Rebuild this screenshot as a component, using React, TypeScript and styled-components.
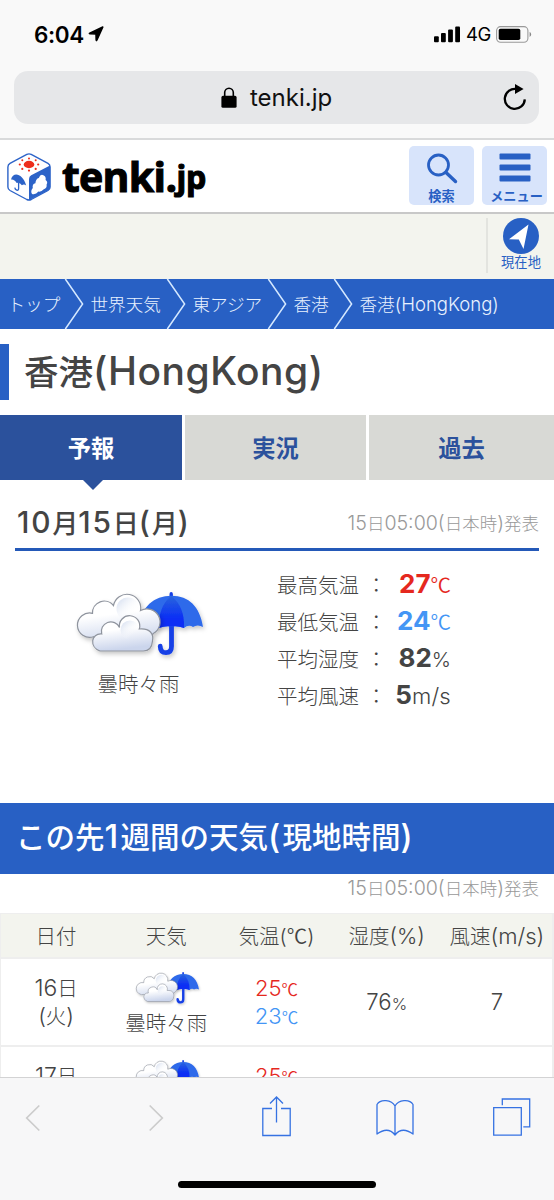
import React from "react";
import styled, { createGlobalStyle } from "styled-components";

const BLUE = "#2860c4";
const INK = "#444";
const RED = "#e5281e";
const SKY = "#4395f5";

const GlobalStyle = createGlobalStyle`
  * { box-sizing: border-box; }
  body {
    margin: 0;
    background: #fff;
    color: ${INK};
    font-family: Inter, "Noto Sans CJK JP", sans-serif;
  }
`;

const Screen = styled.div`
  display: flex;
  flex-direction: column;
  width: 554px;
  height: 1200px;
  overflow: hidden;
  background: #fff;
`;

const Label = styled.span`
  white-space: nowrap;
`;

const Latin = styled.span<{ $scale: number; $track: number }>`
  font-size: ${(p) => p.$scale}em;
  letter-spacing: ${(p) => p.$track}em;
  line-height: 0;
`;

const FullWidth = styled.span`
  font-family: "Noto Sans CJK JP", sans-serif;
  font-weight: 350;
  line-height: 0;
`;

/* Japanese text whose Latin letters and digits are set a little larger. */
const Mixed = ({ text, scale = 1.08, track = 0 }: { text: string; scale?: number; track?: number }) => (
  <Label>
    {text.split(/([!-~]+|℃)/).map((part, i) => {
      if (part === "℃") return <FullWidth key={i}>{part}</FullWidth>;
      if (/^[!-~]/.test(part)) return <Latin key={i} $scale={scale} $track={track}>{part}</Latin>;
      return part;
    })}
  </Label>
);

/* Browser chrome */
const BrowserTop = styled.div`
  flex: none;
  height: 140px;
  padding: 0 15px 0 14px;
  background: #f9f9f9;
  border-bottom: 2px solid #d9dadb;
`;

const StatusBar = styled.div`
  display: flex;
  align-items: center;
  height: 71px;
  padding: 0 7px 3px 20px;
  color: #000;
`;

const Clock = styled.span`
  width: 54px;
  font-size: 22.5px;
  font-weight: 600;
  letter-spacing: -0.4px;
`;

const StatusRight = styled.div`
  display: flex;
  align-items: center;
  margin-left: auto;
`;

const Network = styled.span`
  width: 35px;
  padding-left: 5px;
  font-size: 18.5px;
  letter-spacing: -0.5px;
`;

const AddressBar = styled.div`
  display: grid;
  grid-template-columns: 207px 1fr 36px;
  align-items: center;
  height: 53px;
  border-radius: 14px;
  background: #e6e7e9;
  color: #111;
`;

const Address = styled.div`
  display: flex;
  align-items: center;
  grid-column: 2;
  gap: 13px;
  font-size: 24px;
`;

/* Site header */
const SiteHeader = styled.header`
  flex: none;
  display: flex;
  height: 74px;
  padding: 6px 7px 0 7px;
  border-bottom: 2px solid #c8c8c8;
  background: #fff;
`;

const Brand = styled.div`
  display: flex;
  align-items: flex-start;
  gap: 11px;
  padding-top: 7px;
  flex: 1;
`;

const Wordmark = styled.div`
  display: flex;
  align-items: baseline;
  height: 48px;
  font-family: "Open Sans", sans-serif;
  font-weight: 700;
  font-size: 41px;
  line-height: 47px;
  letter-spacing: -0.7px;
  color: #000;
  -webkit-text-stroke: 1.1px #000;
`;

const WordmarkSuffix = styled.span`
  position: relative;
  top: -3px;
  font-size: 32px;
  letter-spacing: -0.2px;
`;

const HeaderButton = styled.button`
  display: flex;
  flex-direction: column;
  align-items: center;
  justify-content: flex-end;
  gap: 3px;
  width: 65px;
  height: 59px;
  margin-left: 8px;
  padding: 0 0 1px;
  border: 0;
  border-radius: 5px;
  background: #d8e4fb;
  color: ${BLUE};
  font: 700 13.2px/16px "Noto Sans CJK JP", sans-serif;
`;

const MenuLabel = styled(Label)`
  margin-left: 4px;
`;

const LocationBar = styled.div`
  flex: none;
  display: flex;
  justify-content: flex-end;
  height: 65px;
  padding: 4px 0 6px;
  background: #f3f4ee;
`;

const LocationButton = styled.div`
  display: flex;
  flex-direction: column;
  align-items: center;
  width: 68px;
  border-left: 2px solid #e3e4df;
  color: ${BLUE};
  font-size: 13.3px;
  line-height: 17px;
`;

const Breadcrumb = styled.nav`
  flex: none;
  display: flex;
  align-items: center;
  height: 50px;
  background: ${BLUE};
  color: #e8f2ff;
  font-size: 17.6px;
  font-weight: 300;
`;

const Crumb = styled.span<{ $width: number }>`
  width: ${(p) => p.$width}px;
  padding: 0 0 2px 7.5px;
  white-space: nowrap;
`;

const PageTitle = styled.h1`
  flex: none;
  display: flex;
  align-items: center;
  height: 56px;
  margin: 15px 0;
  padding: 2px 0 0 15px;
  border-left: 9px solid ${BLUE};
  font-size: 34.5px;
  line-height: 54px;
  font-weight: 500;
`;

const Tabs = styled.div`
  flex: none;
  display: grid;
  grid-template-columns: 182px 181px 185px;
  gap: 3px;
  height: 65px;
`;

const Tab = styled.div<{ $active?: boolean }>`
  position: relative;
  display: flex;
  align-items: center;
  justify-content: center;
  padding-bottom: 1px;
  background: ${(p) => (p.$active ? "#2b519c" : "#d8d9d5")};
  color: ${(p) => (p.$active ? "#fff" : "#2b519c")};
  font-size: 23.3px;
  font-weight: 700;
`;

const TabArrow = styled.i`
  position: absolute;
  top: 100%;
  left: 83px;
  border: solid transparent;
  border-width: 10px 10px 0;
  border-top-color: #2b519c;
`;

/* Today's forecast */
const DayHeading = styled.div`
  flex: none;
  display: flex;
  align-items: center;
  justify-content: space-between;
  height: 71px;
  margin: 0 15px;
  padding: 20px 0 0 2px;
  border-bottom: 3px solid #2459b8;
`;

const DayName = styled.h2`
  margin: 0;
  font-size: 26px;
  line-height: 30px;
  font-weight: 550;
`;

const Issued = styled.span`
  color: #999;
  font-size: 17.5px;
  line-height: 22px;
  font-weight: 300;
  white-space: nowrap;
`;

const Today = styled.section`
  flex: none;
  display: grid;
  grid-template-columns: 277px 1fr;
  height: 252px;
  padding-top: 14px;
  font-size: 20.5px;
  font-weight: 300;
`;

const TodayWeather = styled.div`
  display: flex;
  flex-direction: column;
  align-items: center;
  gap: 10px;
  padding-top: 25px;
  line-height: 30px;
  & > svg {
    margin-left: 7px;
  }
`;

const Measures = styled.div`
  display: flex;
  flex-direction: column;
`;

const Measure = styled.div<{ $color?: string }>`
  display: grid;
  grid-template-columns: 89px 20px 65px;
  align-items: baseline;
  height: 37px;
  line-height: 37px;
  white-space: nowrap;
  & > :last-child {
    text-align: right;
    justify-self: end;
    color: ${(p) => p.$color ?? INK};
  }
  b {
    font-size: 26px;
    font-weight: 700;
  }
`;

/* Weekly table */
const WeekHeading = styled.h2`
  flex: none;
  display: flex;
  align-items: center;
  height: 71px;
  margin: 0;
  padding: 0 0 4px 16px;
  background: ${BLUE};
  color: #fff;
  font-size: 29.5px;
  line-height: 40px;
  font-weight: 500;
`;

const WeekIssued = styled.div`
  flex: none;
  display: flex;
  justify-content: flex-end;
  height: 39px;
  padding: 4px 15px 0;
`;

const WeekTable = styled.div`
  flex: 1;
  min-height: 0;
  overflow: hidden;
  border: solid #eee;
  border-width: 1px 2px 0 1px;
  font-size: 20.5px;
  font-weight: 300;
`;

const WeekRow = styled.div<{ $head?: boolean }>`
  display: grid;
  grid-template-columns: repeat(5, 1fr);
  align-items: center;
  justify-items: center;
  height: ${(p) => (p.$head ? 45 : 88)}px;
  padding-bottom: ${(p) => (p.$head ? 2 : 0)}px;
  border-bottom: 2px solid #eee;
  background: ${(p) => (p.$head ? "#f3f4ee" : "#fff")};
  white-space: nowrap;
`;

const Stack = styled.div`
  display: flex;
  flex-direction: column;
  align-items: center;
  line-height: 28px;
`;

const DateCell = styled(Stack)`
  padding-top: 2px;
`;

const WeatherCell = styled(Stack)`
  gap: 4px;
  padding-top: 4px;
  & > svg {
    margin-left: 5px;
  }
`;

const Degree = styled.span<{ $color: string }>`
  height: 28px;
  color: ${(p) => p.$color};
  font-size: 22px;
`;

const Unit = styled.small`
  font-size: 16.5px;
  line-height: 0;
`;

/* Bottom toolbar */
const Toolbar = styled.footer`
  flex: none;
  display: flex;
  flex-direction: column;
  align-items: center;
  height: 123px;
  border-top: 1px solid #d3d3d4;
  background: #f7f7f8;
`;

const ToolbarIcons = styled.div`
  display: grid;
  grid-template-columns: 65px 182px 59px 177px 58px;
  align-items: center;
  justify-items: center;
  align-self: flex-start;
  height: 80px;
`;

const HomeIndicator = styled.div`
  width: 198px;
  height: 7px;
  margin-top: 23px;
  border-radius: 4px;
  background: #000;
`;

const Block = styled.svg`
  display: block;
  flex: none;
  overflow: visible;
`;

const LocationArrow = () => (
  <Block width="16" height="16" viewBox="0 0 16 16">
    <path d="M14.800 1 8.800 14.200q-.5.900-.6-.2L8 8 2 7.800q-1.100-.1-.2-.6Z" fill="#000" stroke="#000" strokeWidth="1.600" strokeLinejoin="round" />
  </Block>
);

const StatusIcons = () => (
  <>
    <Block width="27" height="17" viewBox="0 0 27 17">
      <rect x="0" y="10.200" width="4.800" height="6" rx="1" />
      <rect x="7" y="7" width="4.800" height="9.200" rx="1" />
      <rect x="14.100" y="3.600" width="4.800" height="12.600" rx="1" />
      <rect x="21.200" y=".4" width="4.800" height="15.800" rx="1" />
    </Block>
    <Network>4G</Network>
    <Block width="36" height="17" viewBox="0 0 36 17">
      <rect x=".6" y=".6" width="31.300" height="15.600" rx="4" fill="none" stroke="#999" strokeWidth="1.100" />
      <rect x="2.700" y="2.700" width="21.600" height="11.400" rx="1.800" />
      <path d="M33.600 5.700q3.200 2.700 0 5.400Z" fill="#888" />
    </Block>
  </>
);

const Lock = () => (
  <Block width="16" height="21" viewBox="0 0 16 21">
    <path d="M3.700 10V5.600a4.300 4.400 0 0 1 8.600 0V10" fill="none" stroke="#000" strokeWidth="1.600" />
    <rect x=".4" y="8.800" width="15.200" height="12" rx="1.600" />
  </Block>
);

const Reload = () => (
  <Block width="24" height="27" viewBox="0 0 24 27">
    <path d="M13.500 5A10 10 0 1 0 21.800 15.400" fill="none" stroke="#000" strokeWidth="2.300" />
    <path d="M12 0 20.600 5.100 12 10Z" />
  </Block>
);

const CubeLogo = () => (
  <Block width="44" height="48" viewBox="0 0 44 48">
    <path
      d="M19.800 1.400q2.200-1.100 4.400 0l16.800 9q2.100 1.200 2.100 3.600v20q0 2.300-2.100 3.500l-16.800 9q-2.200 1.100-4.400 0L3 37.500Q.9 36.300.9 34V14q0-2.400 2.100-3.600Z"
      fill="#fff"
      stroke="#2c63c8"
      strokeWidth="1.400"
    />
    <path d="M43 12.500V34.500q0 2-2 3L22 47.200V26q0-2.500 2.200-3.700Z" fill="#2c63c8" />
    <path d="M25 41q-1.800-3 .8-6-.8-4 2.600-4.700.4-4.800 3.400-5.400 1.700-4.300 4.600-2.700 2.900 1.400 2.200 4.700 2.600 1.600 1 4.600.6 3.600-2.800 4.800-2.400 2.800-5.400 2.300-2.600 3.300-6.400 2.400Z" fill="#fff" />
    <ellipse cx="22" cy="11.500" rx="5.300" ry="3.700" fill="#ee2d1b" />
    <g fill="#ee2d1b">
      <circle cx="22" cy="5.400" r="1" /><circle cx="22" cy="17.600" r="1.100" />
      <circle cx="12.800" cy="11.500" r="1.100" /><circle cx="31.200" cy="11.500" r="1.100" />
      <circle cx="15.300" cy="7.200" r="1" /><circle cx="28.700" cy="7.200" r="1" />
      <circle cx="15.300" cy="15.900" r="1.100" /><circle cx="28.700" cy="15.900" r="1.100" />
    </g>
    <path d="M4 26.500C6 18.500 15.500 20 19.200 32.500q-2.200-1.700-4.300-.2-2.200-3.300-5.200-2.300-2.300-4-5.700-3.500Z" fill="#2c63c8" />
    <path d="M11.600 29.500v6q0 2.200-1.900 1.600-1.600-.6-1.900-2.500" fill="none" stroke="#2c63c8" strokeWidth="1.300" />
  </Block>
);

const SearchIcon = () => (
  <Block width="32" height="32" viewBox="0 0 32 32">
    <circle cx="12.500" cy="12" r="10" fill="none" stroke={BLUE} strokeWidth="2.800" />
    <path d="M20 19.500 29.500 28.500" stroke={BLUE} strokeWidth="3.400" strokeLinecap="round" />
  </Block>
);

const MenuIcon = () => (
  <Block width="32" height="32" viewBox="0 0 32 32">
    <g fill={BLUE}>
      <rect x=".5" y=".5" width="31" height="6" rx="1" />
      <rect x=".5" y="11.500" width="31" height="6" rx="1" />
      <rect x=".5" y="22.500" width="31" height="6" rx="1" />
    </g>
  </Block>
);

const CompassIcon = () => (
  <Block width="36" height="36" viewBox="0 0 36 36">
    <circle cx="18" cy="18" r="18" fill={BLUE} />
    <path d="M25.500 6.500 20.500 31 15.800 21.600 6 21.200Z" fill="#fff" />
  </Block>
);

const CrumbChevron = () => (
  <Block width="18" height="50" viewBox="0 0 18 50">
    <path d="M.3 0 17.600 25 .3 50" fill="none" stroke="#d4e8ff" strokeWidth="1.500" />
  </Block>
);

const CloudUmbrella = ({ id, width }: { id: string; width: number }) => (
  <Block width={width} height={(width * 70) / 130} viewBox="0 0 130 70">
    <defs>
      <linearGradient id={`${id}-cloud`} x1="0" y1="0" x2=".2" y2="1">
        <stop offset=".45" stopColor="#fff" />
        <stop offset="1" stopColor="#cbd5ec" />
      </linearGradient>
      <linearGradient id={`${id}-puff`} x1="0" y1="0" x2="1" y2="1">
        <stop offset="0" stopColor="#ccd7ec" />
        <stop offset=".7" stopColor="#fff" stopOpacity="0" />
      </linearGradient>
      <linearGradient id={`${id}-canopy`} x1="0" y1="0" x2="0" y2="1">
        <stop offset="0" stopColor="#2a66dd" />
        <stop offset=".7" stopColor="#0b2ef5" />
      </linearGradient>
      <filter id={`${id}-shadow`} x="-10%" y="-10%" width="130%" height="135%">
        <feDropShadow dx="1.500" dy="2.500" stdDeviation="2" floodOpacity=".22" />
      </filter>
    </defs>
    <g filter={`url(#${id}-shadow)`}>
      <path d="M94.500 34V56.500q0 6.200-5.500 6.200-5.600 0-5.800-6.500" fill="none" stroke="#1740e6" strokeWidth="4.800" strokeLinecap="round" />
      <path d="M92.500 4q0-2 1.700-2t1.700 2v3h-3.400Z" fill="#1740e6" />
      <path d="M62 37C64 17 77 5.800 94.500 5.800S123 17 126 37q-5.500-3-10 0-4.500-3-9 1-6-2.500-12.500-1.500-6.500-1-12.500 1.500-5-4-20-1Z" fill="#2f6aea" />
      <path d="M94.200 5.800Q108 17 107 38q-6-2.500-12.500-1.500-6.500-1-12.500 1.500Q81 17 94.200 5.800Z" fill={`url(#${id}-canopy)`} />
    </g>
    <g filter={`url(#${id}-shadow)`} stroke="#8f949e" strokeWidth="1.200">
      <path d="M16.600 46.700A12.200 12.200 0 1 1 15.500 23.300 11.800 11.800 0 0 1 36.500 15.500 13.500 13.500 0 1 1 63.500 20.500 12.500 12.500 0 0 1 76.300 43.500L66 56H28Z" fill={`url(#${id}-cloud)`} />
      <circle cx="51" cy="19" r="11.500" fill={`url(#${id}-puff)`} stroke="none" />
      <path d="M23 61C12 57 14 43 24.700 44A9.500 9.500 0 0 1 42.500 37.500 10.200 10.200 0 1 1 62.300 39C73 38 77 44 75.500 51 75 57 72 61 66.300 61Z" fill={`url(#${id}-cloud)`} />
      <circle cx="53" cy="40" r="9.500" fill={`url(#${id}-puff)`} stroke="none" />
    </g>
  </Block>
);

const NavChevron = ({ forward }: { forward?: boolean }) => (
  <Block width="14" height="26" viewBox="0 0 14 26">
    <path d={forward ? "M.7.500 13.300 13 .7 25.500" : "M13.300.500.7 13l12.600 12.500"} fill="none" stroke="#ccc" strokeWidth="1.700" />
  </Block>
);

const ShareIcon = () => (
  <Block width="29" height="40" viewBox="0 0 29 40">
    <path d="M10 10.500H.8v27h27.400v-27H19M14.500 24.500V-1M8 5.500 14.500-1 21 5.500" fill="none" stroke="#3672e2" strokeWidth="1.300" />
  </Block>
);

const BookIcon = () => (
  <Block width="38" height="37" viewBox="0 0 38 37">
    <path d="M19 35V6C15.500-.3 4.500-1.300 1 4.500V34Q12 26 19 35 26 26 37 34V4.500C33.500-1.300 22.500-.3 19 6" fill="none" stroke="#3672e2" strokeWidth="1.300" strokeLinejoin="round" />
  </Block>
);

const PagesIcon = () => (
  <Block width="38" height="38" viewBox="0 0 38 38">
    <path d="M.7 8.700h27.600v27.500H.7ZM9.300 6.300V0h27.400v27.800h-6.400" fill="none" stroke="#3672e2" strokeWidth="1.300" />
  </Block>
);

const week = [
  { day: "16日", name: "(火)", high: 25, low: 23, humidity: 76, wind: "7" },
  { day: "17日", name: "(水)", high: 25, low: 23, humidity: 76, wind: "7" },
];

export default function App() {
  return (
    <Screen>
      <GlobalStyle />
      <BrowserTop>
        <StatusBar>
          <Clock>6:04</Clock>
          <LocationArrow />
          <StatusRight>
            <StatusIcons />
          </StatusRight>
        </StatusBar>
        <AddressBar>
          <Address>
            <Lock />
            <Label>tenki.jp</Label>
          </Address>
          <Reload />
        </AddressBar>
      </BrowserTop>

      <SiteHeader>
        <Brand>
          <CubeLogo />
          <Wordmark>
            <Label>tenki.</Label>
            <WordmarkSuffix>jp</WordmarkSuffix>
          </Wordmark>
        </Brand>
        <HeaderButton>
          <SearchIcon />
          <Label>検索</Label>
        </HeaderButton>
        <HeaderButton>
          <MenuIcon />
          <MenuLabel>メニュー</MenuLabel>
        </HeaderButton>
      </SiteHeader>

      <LocationBar>
        <LocationButton>
          <CompassIcon />
          <Label>現在地</Label>
        </LocationButton>
      </LocationBar>

      <Breadcrumb>
        <Crumb $width={65}>トップ</Crumb>
        <CrumbChevron />
        <Crumb $width={84}>世界天気</Crumb>
        <CrumbChevron />
        <Crumb $width={83}>東アジア</Crumb>
        <CrumbChevron />
        <Crumb $width={48}>香港</Crumb>
        <CrumbChevron />
        <Crumb $width={180}>
          <Mixed text="香港(HongKong)" scale={1.055} />
        </Crumb>
      </Breadcrumb>

      <PageTitle>
        <Mixed text="香港(HongKong)" scale={1.13} track={0.014} />
      </PageTitle>

      <Tabs>
        <Tab $active>
          予報
          <TabArrow />
        </Tab>
        <Tab>実況</Tab>
        <Tab>過去</Tab>
      </Tabs>

      <DayHeading>
        <DayName>
          <Mixed text="10月15日(月)" scale={1.15} track={0.06} />
        </DayName>
        <Issued>
          <Mixed text="15日05:00(日本時)発表" scale={1.12} />
        </Issued>
      </DayHeading>

      <Today>
        <TodayWeather>
          <CloudUmbrella id="today" width={130} />
          <Label>曇時々雨</Label>
        </TodayWeather>
        <Measures>
          <Measure $color={RED}>
            <span>最高気温</span>
            <span>：</span>
            <span><b>27</b><Mixed text="℃" /></span>
          </Measure>
          <Measure $color={SKY}>
            <span>最低気温</span>
            <span>：</span>
            <span><b>24</b><Mixed text="℃" /></span>
          </Measure>
          <Measure>
            <span>平均湿度</span>
            <span>：</span>
            <span><b>82</b><Mixed text="%" scale={1} /></span>
          </Measure>
          <Measure>
            <span>平均風速</span>
            <span>：</span>
            <span><b>5</b><Mixed text="m/s" scale={1.08} track={0.01} /></span>
          </Measure>
        </Measures>
      </Today>

      <WeekHeading>
        <Mixed text="この先1週間の天気(現地時間)" scale={1.12} track={0.07} />
      </WeekHeading>
      <WeekIssued>
        <Issued>
          <Mixed text="15日05:00(日本時)発表" scale={1.12} />
        </Issued>
      </WeekIssued>
      <WeekTable>
        <WeekRow $head>
          <Mixed text="日付" />
          <Mixed text="天気" />
          <Mixed text="気温(℃)" scale={1} />
          <Mixed text="湿度(%)" scale={1.06} />
          <Mixed text="風速(m/s)" scale={1.08} />
        </WeekRow>
        {week.map((d) => (
          <WeekRow key={d.day}>
            <DateCell>
              <Mixed text={d.day} scale={1.12} />
              <Mixed text={d.name} />
            </DateCell>
            <WeatherCell>
              <CloudUmbrella id={`w${d.day.slice(0, 2)}`} width={65} />
              <span>曇時々雨</span>
            </WeatherCell>
            <Stack>
              <Degree $color={RED}>{d.high}<Unit><Mixed text="℃" /></Unit></Degree>
              <Degree $color={SKY}>{d.low}<Unit><Mixed text="℃" /></Unit></Degree>
            </Stack>
            <span><Mixed text={String(d.humidity)} /><Unit><Mixed text="%" scale={1} /></Unit></span>
            <Mixed text={d.wind} />
          </WeekRow>
        ))}
      </WeekTable>

      <Toolbar>
        <ToolbarIcons>
          <NavChevron />
          <NavChevron forward />
          <ShareIcon />
          <BookIcon />
          <PagesIcon />
        </ToolbarIcons>
        <HomeIndicator />
      </Toolbar>
    </Screen>
  );
}
